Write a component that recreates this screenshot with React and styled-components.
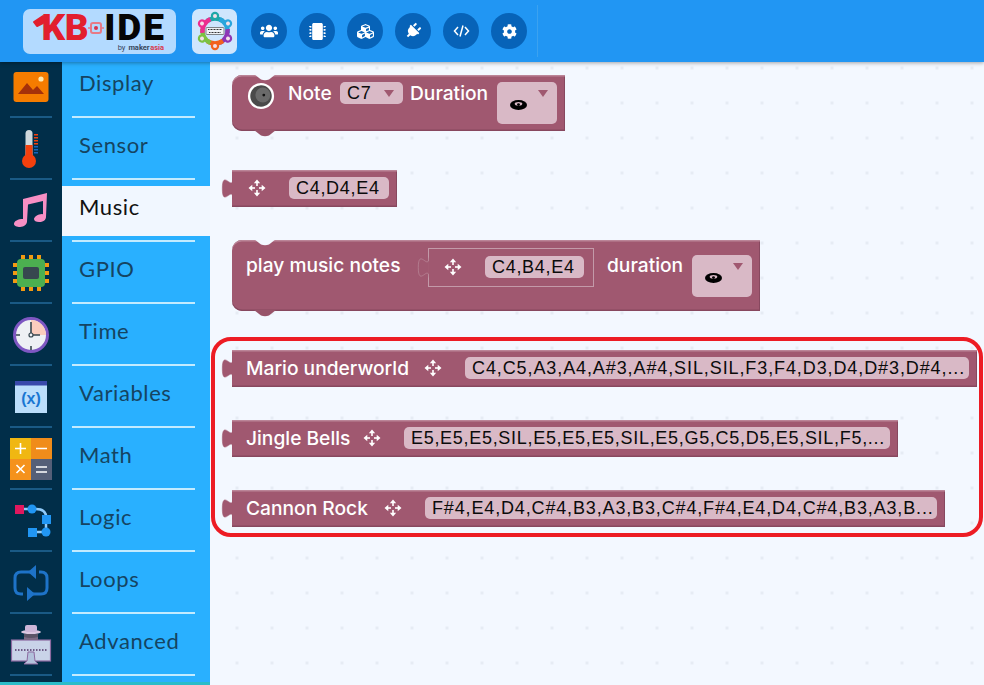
import React from "react";
import styled, { createGlobalStyle } from "styled-components";
import { FaUsers, FaMicrochip, FaCubes, FaPlug, FaCog } from "react-icons/fa";

const GlobalStyle = createGlobalStyle`
  html, body { margin: 0; padding: 0; height: 100%; overflow: hidden; }
  body { font-family: "Inter", "Liberation Sans", sans-serif; background: #f3f8ff; }
`;

const Page = styled.div`
  width: 984px;
  height: 685px;
  display: flex;
  flex-direction: column;
  overflow: hidden;
`;

/* top bar */
const TopBar = styled.header`
  height: 62px;
  flex: none;
  background: #2196f3;
  display: flex;
  align-items: center;
  padding-left: 23px;
  box-shadow: 0 1px 4px rgba(0, 0, 0, 0.35);
  position: relative;
  z-index: 5;
`;

const LogoCard = styled.div`
  width: 153px;
  height: 45px;
  box-sizing: border-box;
  background: #b3daff;
  border-radius: 7px;
  display: flex;
  flex-direction: column;
  align-items: flex-end;
  padding: 4px 10px 0 0;
`;

const LogoWord = styled.div`
  display: flex;
  align-items: center;
  height: 30px;
  font-family: "Roboto", "Liberation Sans", sans-serif;
  font-weight: 900;
  font-size: 37px;
  letter-spacing: -0.5px;
  line-height: 30px;
`;

const LogoFlag = styled.svg`
  flex: none;
  width: 12px;
  height: 28px;
  margin-right: -2px;
`;

const LogoRed = styled.span`
  color: #e21f2e;
`;

const LogoBlack = styled.span`
  color: #060606;
  letter-spacing: 2px;
`;

const LogoBy = styled.div`
  display: flex;
  margin-right: 2px;
  font-family: "Roboto", "Liberation Sans", sans-serif;
  font-size: 7.5px;
  line-height: 9px;
  font-weight: 700;
  color: #38485c;
`;

const LogoByWord = styled.span`
  font-weight: 400;
  margin-right: 3px;
`;

const LogoAsia = styled.span`
  color: #d9344c;
  margin-left: 0.5px;
`;

const CommunityCard = styled.div`
  width: 45px;
  height: 45px;
  background: #cfe6fd;
  border-radius: 7px;
  margin: 0 14px 0 16px;
  display: flex;
  align-items: center;
  justify-content: center;
`;

const ToolButton = styled.button`
  width: 36px;
  height: 36px;
  padding: 0;
  border: 0;
  border-radius: 50%;
  background: #0763b8;
  color: #fff;
  font-size: ${(p) => p.$size ?? 16}px;
  display: flex;
  align-items: center;
  justify-content: center;
  margin-right: 12px;

  svg {
    transform: rotate(${(p) => p.$turn ?? 0}deg);
  }
`;

const TopDivider = styled.div`
  width: 1px;
  height: 52px;
  background: #3ba2f0;
  margin-left: -2px;
`;

/* left side */
const Body = styled.div`
  flex: 1;
  display: flex;
  min-height: 0;
`;

const Sidebar = styled.nav`
  width: 210px;
  flex: none;
  display: grid;
  grid-template-columns: 62px 148px;
  grid-auto-rows: 62px;
  grid-template-rows: 56px;
  background: linear-gradient(90deg, #012e49 62px, #29b0ff 62px);
  border-bottom: 3px solid #2bbcc8;
  box-sizing: border-box;
`;

const RailCell = styled.div`
  display: flex;
  align-items: center;
  justify-content: center;
  position: relative;

  &::after {
    content: "";
    position: absolute;
    left: 10px;
    right: 10px;
    bottom: 0;
    height: 2px;
    background: #1a5a85;
  }
`;

const CategoryCell = styled.div`
  position: relative;
  display: flex;
  align-items: flex-end;

  &::after {
    content: "";
    position: absolute;
    left: 10px;
    right: 15px;
    bottom: 0;
    height: 2px;
    background: #c3ebff;
  }
`;

const CategoryLabel = styled.div`
  width: 100%;
  height: 50px;
  margin-bottom: 6px;
  box-sizing: border-box;
  padding: 0 0 10px 17px;
  display: flex;
  align-items: center;
  font-family: "Lato", "Liberation Sans", sans-serif;
  font-size: 22px;
  letter-spacing: 0.6px;
  color: ${(p) => (p.$active ? "#111" : "#154462")};
  background: ${(p) => (p.$active ? "#f1f7ff" : "transparent")};
`;

/* workspace */
const Canvas = styled.main`
  flex: 1;
  position: relative;
  background-color: #f3f8ff;
  background-image: radial-gradient(circle, #e6ecf4 1.6px, transparent 2px);
  background-size: 35px 35px;
  background-position: 9.5px -11.5px;
`;

const Block = styled.div`
  position: absolute;
  left: ${(p) => p.$x}px;
  top: ${(p) => p.$y}px;
  width: ${(p) => p.$w}px;
  height: ${(p) => p.$h}px;
  box-sizing: border-box;
  padding: ${(p) => p.$top ?? 7}px 0 0 ${(p) => p.$pad ?? 14}px;
  display: flex;
  align-items: flex-start;
  background: #a05870;
  border-radius: ${(p) => (p.$stack ? "10px 0 0 10px" : "0")};
  box-shadow: inset 0 1.5px 0 #bb8598, inset 0 -1.5px 0 #87485f, inset -1px 0 0 #87485f;
`;

const BlockLabel = styled.span`
  flex: none;
  width: ${(p) => p.$w}px;
  margin-top: ${(p) => p.$mt ?? 0}px;
  margin-left: ${(p) => p.$ml ?? 0}px;
  height: 23px;
  line-height: 23px;
  font-family: "Inter", "Liberation Sans", sans-serif;
  font-weight: 500;
  font-size: 19.2px;
  color: #fff;
  white-space: nowrap;
`;

const Field = styled.span`
  flex: none;
  position: relative;
  width: ${(p) => p.$w}px;
  height: ${(p) => p.$h ?? 22}px;
  margin-top: ${(p) => p.$mt ?? 0}px;
  margin-left: ${(p) => p.$ml ?? 0}px;
  box-sizing: border-box;
  padding-left: 7px;
  background: #d9b9c6;
  border-radius: 5px;
  color: #0b0b0b;
  font-family: "Liberation Sans", Arial, sans-serif;
  font-size: 18px;
  letter-spacing: ${(p) => p.$track ?? 0.7}px;
  line-height: 22px;
  white-space: nowrap;
  overflow: hidden;
`;

const Caret = styled.i`
  position: absolute;
  right: 9px;
  top: 8px;
  width: 0;
  height: 0;
  border-left: 5px solid transparent;
  border-right: 5px solid transparent;
  border-top: 7px solid #a05870;
`;

const EyeMark = styled.svg`
  position: absolute;
  left: 13px;
  top: 17px;
  width: 17px;
  height: 12px;
`;

const MoveMark = styled.svg`
  flex: none;
  width: 20px;
  height: 20px;
  margin: 1px 22px 0 ${(p) => p.$ml ?? 15}px;
`;

const Socket = styled.div`
  flex: none;
  position: relative;
  width: 166px;
  height: 39px;
  box-sizing: border-box;
  margin: 0 13px 0 23px;
  padding-top: 8px;
  display: flex;
  align-items: flex-start;
  background: #a05870;
  box-shadow: inset 0 0 0 1px #c39aa9, inset 1px 1px 0 #87485f;
`;

const SpeakerMark = styled.svg`
  flex: none;
  width: 28px;
  height: 28px;
  margin: 0 13px 0 0;
`;

const LeftTab = styled.svg`
  position: absolute;
  left: -11px;
  top: ${(p) => p.$y ?? 8}px;
  width: 12px;
  height: 21px;
`;

const HatNotch = styled.svg`
  position: absolute;
  left: 22px;
  top: -1px;
  width: 22px;
  height: 7px;
`;

const BottomTab = styled.svg`
  position: absolute;
  left: 22px;
  bottom: -6px;
  width: 22px;
  height: 7px;
`;

const RedFrame = styled.div`
  position: absolute;
  left: 1px;
  top: 275px;
  width: 772px;
  height: 200px;
  box-sizing: border-box;
  border: 4px solid #ed1c24;
  border-radius: 20px;
  pointer-events: none;
`;

const Move = ({ ml }) => (
  <MoveMark viewBox="0 0 20 20" $ml={ml}>
    <g fill="#fff">
      <path d="M10 1.500l3.200 3.800h-6.400zM10 18.500l3.200-3.800h-6.400zM1.500 10l3.800-3.200v6.400zM18.500 10l-3.800-3.200v6.400z" />
      <rect x="9.200" y="5" width="1.600" height="3" />
      <rect x="9.200" y="12" width="1.600" height="3" />
      <rect x="5" y="9.200" width="3" height="1.600" />
      <rect x="12" y="9.200" width="3" height="1.600" />
    </g>
  </MoveMark>
);

const Eye = () => (
  <EyeMark viewBox="0 0 17 12">
    <ellipse cx="8.500" cy="6" rx="8.500" ry="5" fill="#000" />
    <ellipse cx="8.500" cy="4.800" rx="3.800" ry="1.900" fill="#d9b9c6" />
    <circle cx="8.500" cy="5.600" r="1.400" fill="#000" />
  </EyeMark>
);

/* blockly style puzzle tab */
const Tab = ({ y, edge = "#a05870" }) => (
  <LeftTab viewBox="0 0 9.200 16" $y={y}>
    <path d="M9 .5c0 10-8-8-8 7.500s8-2.500 8 7.500h.5V.5z" fill="#a05870" stroke={edge} strokeWidth="0.400" />
  </LeftTab>
);

const Hat = () => (
  <HatNotch viewBox="0 0 22 7">
    <path d="M0 0l7 5.500q4 1.500 8 0L22 0z" fill="#f3f8ff" />
  </HatNotch>
);

const Foot = () => (
  <BottomTab viewBox="0 0 22 7">
    <path d="M0 0l7 5.500q4 1.500 8 0L22 0z" fill="#975369" />
  </BottomTab>
);

const CodeGlyph = () => (
  <svg width="17" height="14" viewBox="0 0 17 14" fill="none" stroke="#fff" strokeWidth="1.500">
    <path d="M5 3L1.500 7 5 11M12 3l3.500 4L12 11M10 1.500L7 12.500" />
  </svg>
);

/* rail icons, all drawn on a 42 box */
const railIcons = [
  <svg width="42" height="42" viewBox="0 0 42 42" key="display">
    <rect x="3.500" y="3" width="35" height="30" rx="3" fill="#f57c00" />
    <path d="M8 25l9-11 6 7 4-4 7 8z" fill="#a5310a" />
    <circle cx="31" cy="10" r="2.600" fill="#ffe9b0" />
  </svg>,
  <svg width="42" height="42" viewBox="0 0 42 42" key="sensor">
    <rect x="15.500" y="2" width="7" height="30" rx="3.500" fill="#cfd8dc" />
    <rect x="15.500" y="17" width="7" height="16" fill="#f4400d" />
    <circle cx="19" cy="33" r="7" fill="#f4400d" />
    <g fill="#f4400d">
      <rect x="24" y="6" width="4" height="1.500" />
      <rect x="24" y="9" width="4" height="1.500" />
      <rect x="24" y="12" width="4" height="1.500" />
      <rect x="24" y="15" width="4" height="1.500" />
    </g>
    <g fill="#1565c0">
      <rect x="24" y="18" width="4" height="1.500" />
      <rect x="24" y="21" width="4" height="1.500" />
      <rect x="24" y="24" width="4" height="1.500" />
    </g>
  </svg>,
  <svg width="42" height="42" viewBox="0 0 42 42" key="music">
    <path
      d="M13 9l24-6-1 24c0 3-3 5-7 5-3 0-5-1-5-3s4-5 8-5l1 .3V11l-15 3.600-1 17c0 3-3 5.400-7 5.400-3 0-6-1-6-3 0-3 4-5 9-5z"
      fill="#f78fc4"
    />
  </svg>,
  <svg width="42" height="42" viewBox="0 0 42 42" key="gpio">
    <g fill="#f29a12">
      {[11, 19, 27].map((p) => (
        <React.Fragment key={p}>
          <rect x={p} y="3" width="4" height="36" />
          <rect x="3" y={p} width="36" height="4" />
        </React.Fragment>
      ))}
    </g>
    <rect x="7" y="7" width="28" height="28" rx="4" fill="#4caf50" />
    <rect x="13" y="15" width="16" height="12" rx="2" fill="#37474f" />
  </svg>,
  <svg width="42" height="42" viewBox="0 0 42 42" key="time">
    <circle cx="21" cy="21" r="16.500" fill="#eef1f4" stroke="#7e57c2" strokeWidth="3" />
    <path d="M21 6a15 15 0 0 1 15 15H21z" fill="#fbcdbd" />
    <path d="M21 8v13h9M6 21h4M21 32v4" stroke="#37474f" strokeWidth="1.600" fill="none" />
    <circle cx="21" cy="21" r="2" fill="#eef1f4" stroke="#37474f" strokeWidth="1.200" />
  </svg>,
  <svg width="42" height="42" viewBox="0 0 42 42" key="vars">
    <rect x="5" y="5" width="32" height="32" fill="#bbdefb" />
    <rect x="5" y="5" width="32" height="4.500" fill="#3949ab" />
    <text x="21" y="28" textAnchor="middle" fontFamily="Liberation Sans, sans-serif" fontWeight="700" fontSize="16" fill="#1976d2">
      (x)
    </text>
  </svg>,
  <svg width="42" height="42" viewBox="0 0 42 42" key="math">
    <rect width="21" height="21" fill="#f0b712" />
    <rect x="21" width="21" height="21" fill="#f08c1a" />
    <rect y="21" width="21" height="21" fill="#f5921c" />
    <rect x="21" y="21" width="21" height="21" fill="#555f78" />
    <path d="M5 10.500h11M10.500 5v11M26 10.500h11M6.500 27l8 8M14.500 27l-8 8M26 29h11M26 34h11" stroke="#fff" strokeWidth="1.600" />
  </svg>,
  <svg width="42" height="42" viewBox="0 0 42 42" key="logic">
    <path d="M13 9h13q10 0 10 8v11q0 4-4 4H20" stroke="#90caf9" strokeWidth="2.500" fill="none" />
    <rect x="5" y="5" width="9" height="9" fill="#e0185e" />
    <circle cx="22" cy="9" r="4.500" fill="#2196f3" />
    <rect x="32" y="15" width="9" height="9" fill="#2196f3" />
    <circle cx="36" cy="32" r="4.500" fill="#2196f3" />
    <rect x="18" y="28" width="9" height="9" fill="#2196f3" />
  </svg>,
  <svg width="42" height="42" viewBox="0 0 42 42" key="loops">
    <g fill="none" stroke="#1e73c8" strokeWidth="3">
      <path d="M13 32H11q-6 0-6-6V16q0-6 6-6h9" />
      <path d="M29 10h2q6 0 6 6v10q0 6-6 6H22" />
    </g>
    <path d="M26 3l-8 7 8 7zM17 39l8-7-8-7z" fill="#1e73c8" />
  </svg>,
  <svg width="42" height="42" viewBox="0 0 42 42" key="advanced">
    <rect x="1.500" y="16" width="39" height="21" fill="#c9d3e8" stroke="#8c6aa0" strokeWidth="1.200" />
    <path d="M17 37l1-9h6l1 9 3 3H14z" fill="#b3c2dc" stroke="#8c6aa0" strokeWidth="1" />
    <path d="M5 26h32" stroke="#6d5a85" strokeWidth="2" strokeDasharray="1.500 1.500" />
    <path d="M14 13h14v3H14z" fill="#7d6a85" />
    <path d="M14 10h14v3q-7 2-14 0z" fill="#5c5468" />
    <ellipse cx="21" cy="8" rx="10" ry="2" fill="#dcc8e2" />
    <rect x="15" y="1" width="12" height="7" rx="2" fill="#cdb6d8" />
  </svg>,
];

const people = [
  { angle: -90, color: "#1da8a8" },
  { angle: -30, color: "#2aa5dc" },
  { angle: 30, color: "#8e35b5" },
  { angle: 90, color: "#f2621f" },
  { angle: 150, color: "#7cc242" },
  { angle: 210, color: "#ec2d8f" },
];

const categories = ["Display", "Sensor", "Music", "GPIO", "Time", "Variables", "Math", "Logic", "Loops", "Advanced"];

const tools = [
  { key: "users", glyph: <FaUsers />, size: 18 },
  { key: "chip", glyph: <FaMicrochip />, size: 17 },
  { key: "cubes", glyph: <FaCubes />, size: 17 },
  { key: "plug", glyph: <FaPlug />, size: 16, turn: 45 },
  { key: "code", glyph: <CodeGlyph /> },
  { key: "cog", glyph: <FaCog />, size: 15 },
];

const songs = [
  { y: 288, w: 745, name: "Mario underworld", nameW: 162, fieldW: 504, track: 0.9, notes: "C4,C5,A3,A4,A#3,A#4,SIL,SIL,F3,F4,D3,D4,D#3,D#4,..." },
  { y: 358, w: 666, name: "Jingle Bells", nameW: 101, fieldW: 486, track: 0.7, notes: "E5,E5,E5,SIL,E5,E5,E5,SIL,E5,G5,C5,D5,E5,SIL,F5,..." },
  { y: 428, w: 713, name: "Cannon Rock", nameW: 122, fieldW: 512, track: 0.85, notes: "F#4,E4,D4,C#4,B3,A3,B3,C#4,F#4,E4,D4,C#4,B3,A3,B..." },
];

const App = () => (
  <Page>
    <GlobalStyle />
    <TopBar>
      <LogoCard>
        <LogoWord>
          <LogoFlag viewBox="0 0 12 28">
            <path d="M2 8L11 2v7L5 12z" fill="#e21f2e" stroke="#e21f2e" strokeWidth="2" strokeLinejoin="round" />
          </LogoFlag>
          <LogoRed>KB</LogoRed>
          <svg width="16" height="16" viewBox="0 0 16 16">
            <rect x="3" y="3" width="10" height="10" rx="2" fill="none" stroke="#e77a86" strokeWidth="2" />
            <circle cx="8" cy="8" r="2" fill="#d9344c" />
            <path d="M0 8h3M13 8h3" stroke="#e77a86" strokeWidth="1.500" />
          </svg>
          <LogoBlack>IDE</LogoBlack>
        </LogoWord>
        <LogoBy>
          <LogoByWord>by</LogoByWord>
          <span>maker</span>
          <LogoAsia>asia</LogoAsia>
        </LogoBy>
      </LogoCard>
      <CommunityCard>
        <svg width="40" height="40" viewBox="-20 -20 40 40">
          {people.map((p) => (
            <g key={p.angle} transform={`rotate(${p.angle + 90})`}>
              <path d="M-8 -10Q0 -15 8 -10" fill="none" stroke={p.color} strokeWidth="4.500" />
              <circle cx="0" cy="-15" r="4.200" fill={p.color} />
              <circle cx="0" cy="-15" r="2" fill="#f5dfe8" />
            </g>
          ))}
          <rect x="-9" y="-3.500" width="18" height="7" rx="1" fill="#eef2f6" stroke="#555" strokeWidth="0.700" />
          <path d="M-7 -1.500h14M-6 1.500h12" stroke="#333" strokeWidth="1.200" strokeDasharray="1 0.500" />
        </svg>
      </CommunityCard>
      {tools.map((tool) => (
        <ToolButton key={tool.key} $size={tool.size} $turn={tool.turn}>
          {tool.glyph}
        </ToolButton>
      ))}
      <TopDivider />
    </TopBar>
    <Body>
      <Sidebar>
        {categories.map((name, i) => (
          <React.Fragment key={name}>
            <RailCell>{railIcons[i]}</RailCell>
            <CategoryCell>
              <CategoryLabel $active={name === "Music"}>{name}</CategoryLabel>
            </CategoryCell>
          </React.Fragment>
        ))}
      </Sidebar>
      <Canvas>
        <Block $x={22} $y={13} $w={333} $h={56} $stack $pad={15}>
          <Hat />
          <SpeakerMark viewBox="0 0 30 30">
            <circle cx="15" cy="15" r="14" fill="#fff" />
            <circle cx="15" cy="15" r="11.500" fill="#4a4a4a" />
            <circle cx="17" cy="14" r="8" fill="#6a6a6a" />
            <circle cx="18" cy="14" r="1.500" fill="#111" />
          </SpeakerMark>
          <BlockLabel $w={45}>Note</BlockLabel>
          <Field $w={63} $ml={7}>
            C7
            <Caret />
          </Field>
          <BlockLabel $w={80} $ml={7}>Duration</BlockLabel>
          <Field $w={60} $h={42} $ml={7}>
            <Caret />
            <Eye />
          </Field>
          <Foot />
        </Block>

        <Block $x={22} $y={108} $w={165} $h={37} $pad={0}>
          <Tab />
          <Move />
          <Field $w={100}>C4,D4,E4</Field>
        </Block>

        <Block $x={22} $y={178} $w={528} $h={71} $stack $top={8}>
          <Hat />
          <BlockLabel $w={159} $mt={6}>play music notes</BlockLabel>
          <Socket>
            <Tab y={9} edge="#c39aa9" />
            <Move />
            <Field $w={99}>C4,B4,E4</Field>
          </Socket>
          <BlockLabel $w={78} $mt={6}>duration</BlockLabel>
          <Field $w={60} $h={42} $mt={7} $ml={7}>
            <Caret />
            <Eye />
          </Field>
          <Foot />
        </Block>

        {songs.map((song) => (
          <Block key={song.name} $x={22} $y={song.y} $w={song.w} $h={37}>
            <Tab />
            <BlockLabel $w={song.nameW}>{song.name}</BlockLabel>
            <Move />
            <Field $w={song.fieldW} $track={song.track}>{song.notes}</Field>
          </Block>
        ))}

        <RedFrame />
      </Canvas>
    </Body>
  </Page>
);

export default App;
